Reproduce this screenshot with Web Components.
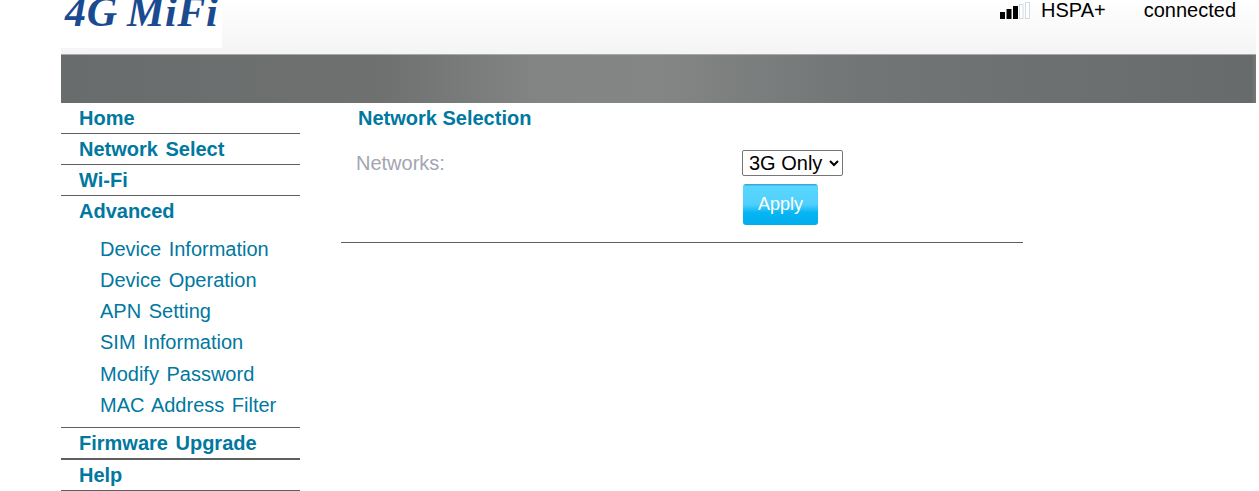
<!DOCTYPE html>
<html><head><meta charset="utf-8"><style>
html,body{margin:0;padding:0;background:#fff;overflow:hidden}
body{width:1259px;height:491px;font-family:"Liberation Sans",Arial,sans-serif}
</style></head><body>
<mifi-app></mifi-app>
<script>
function def(name, html){
  customElements.define(name, class extends HTMLElement{
    constructor(){super();this.attachShadow({mode:'open'}).innerHTML=html;}
  });
}
def('mifi-header',`<style>
:host{display:flex;justify-content:space-between;height:55px;box-sizing:border-box;width:1195px;margin-left:61px;background:linear-gradient(#fff,#f4f4f4);border-bottom:1px solid #a8a8a8;overflow:hidden}
.logo{width:161px;height:48px;background:#fff;overflow:hidden;box-sizing:border-box;padding-left:4px}
.logo span{display:block;margin-top:-13px;font:italic bold 42px/50px "Liberation Serif",serif;color:#1a4a90;white-space:nowrap;letter-spacing:.7px;word-spacing:-2px}
.status{display:flex;align-items:flex-start;font-size:20px;line-height:20px;color:#000;padding-right:20px}
svg{display:block;margin:2px 10px 0 0}
.net{margin-right:38px}
</style><div class="logo"><span>4G MiFi</span></div>
<div class="status"><svg width="31" height="18" viewBox="0 0 31 18"><rect x="0" y="10" width="5" height="7" fill="#000"/><rect x="6.500" y="7" width="5" height="10" fill="#000"/><rect x="13" y="4" width="5" height="13" fill="#000"/><rect x="19.500" y="2.500" width="3.500" height="14" fill="#fff" stroke="#cfdbeb"/><rect x="25.500" y=".5" width="4" height="16" fill="#fff" stroke="#cfdbeb"/></svg><span class="net">HSPA+</span><span>connected</span></div>`);
def('mifi-banner',`<style>:host{display:block;width:1195px;height:48px;margin-left:61px;background:linear-gradient(90deg,#696c6c 0,#6e7170 27%,#828584 40%,#838685 50%,#727575 67%,#686b6b 99.6%,#767878 100%)}</style>`);
def('nav-head',`<style>:host{display:block;box-sizing:border-box;height:31px;padding-left:18px;font:bold 20px/30px "Liberation Sans",sans-serif;color:#00789f;word-spacing:2px;border-bottom:1px solid #5f5f5f}
:host([plain]){border-bottom:0}:host([thick]){height:32px;border-bottom-width:2px}</style><slot></slot>`);
def('nav-item',`<style>:host{display:block;height:31.2px;padding-left:39px;font:20px/31px "Liberation Sans",sans-serif;color:#00789f;word-spacing:2px}</style><slot></slot>`);
def('mifi-nav',`<style>:host{display:block;width:239px;flex:none}.sub{padding:6.8px 0 6.2px;border-bottom:1px solid #5f5f5f}</style>
<nav-head>Home</nav-head><nav-head>Network Select</nav-head><nav-head>Wi-Fi</nav-head><nav-head plain>Advanced</nav-head>
<div class="sub"><nav-item>Device Information</nav-item><nav-item>Device Operation</nav-item><nav-item>APN Setting</nav-item><nav-item>SIM Information</nav-item><nav-item>Modify Password</nav-item><nav-item>MAC Address Filter</nav-item></div>
<nav-head thick>Firmware Upgrade</nav-head><nav-head>Help</nav-head>`);
def('mifi-form',`<style>:host{display:block;width:682px;margin-left:41px;height:140px;box-sizing:border-box;border-bottom:1px solid #5f5f5f}
h1{margin:0 0 0 17px;font:bold 20px/30px "Liberation Sans",sans-serif;color:#00789f}
.row{display:grid;grid-template-columns:402px auto;margin-top:15px}
label{padding-left:15px;font:20px/30px "Liberation Sans",sans-serif;color:#a3a5b3}
.ctl{display:flex;flex-direction:column;align-items:flex-start;gap:8px}
select{font:20px "Liberation Sans",sans-serif;height:26px;width:101px;margin:2px 0 0 -1px;background:#fff;color:#000;padding:0 0 0 2px;border:1px solid #767676;border-radius:2px}
button{width:75px;height:41px;border:0;border-radius:3px;color:#fff;font:18px "Liberation Sans",sans-serif;padding:0;background:linear-gradient(#2f9fcb 0,#5ad6ff 6%,#4fd0fc 50%,#06b5f2 70%,#00aeef 100%)}
</style><h1>Network Selection</h1>
<div class="row"><label>Networks:</label><div class="ctl"><select><option>3G Only</option></select><button>Apply</button></div></div>`);
def('mifi-app',`<style>:host{display:block}.main{display:flex}</style>
<mifi-header></mifi-header><mifi-banner></mifi-banner>
<div class="main" style="margin-left:61px"><mifi-nav></mifi-nav><mifi-form></mifi-form></div>`);
</script>
</body></html>
